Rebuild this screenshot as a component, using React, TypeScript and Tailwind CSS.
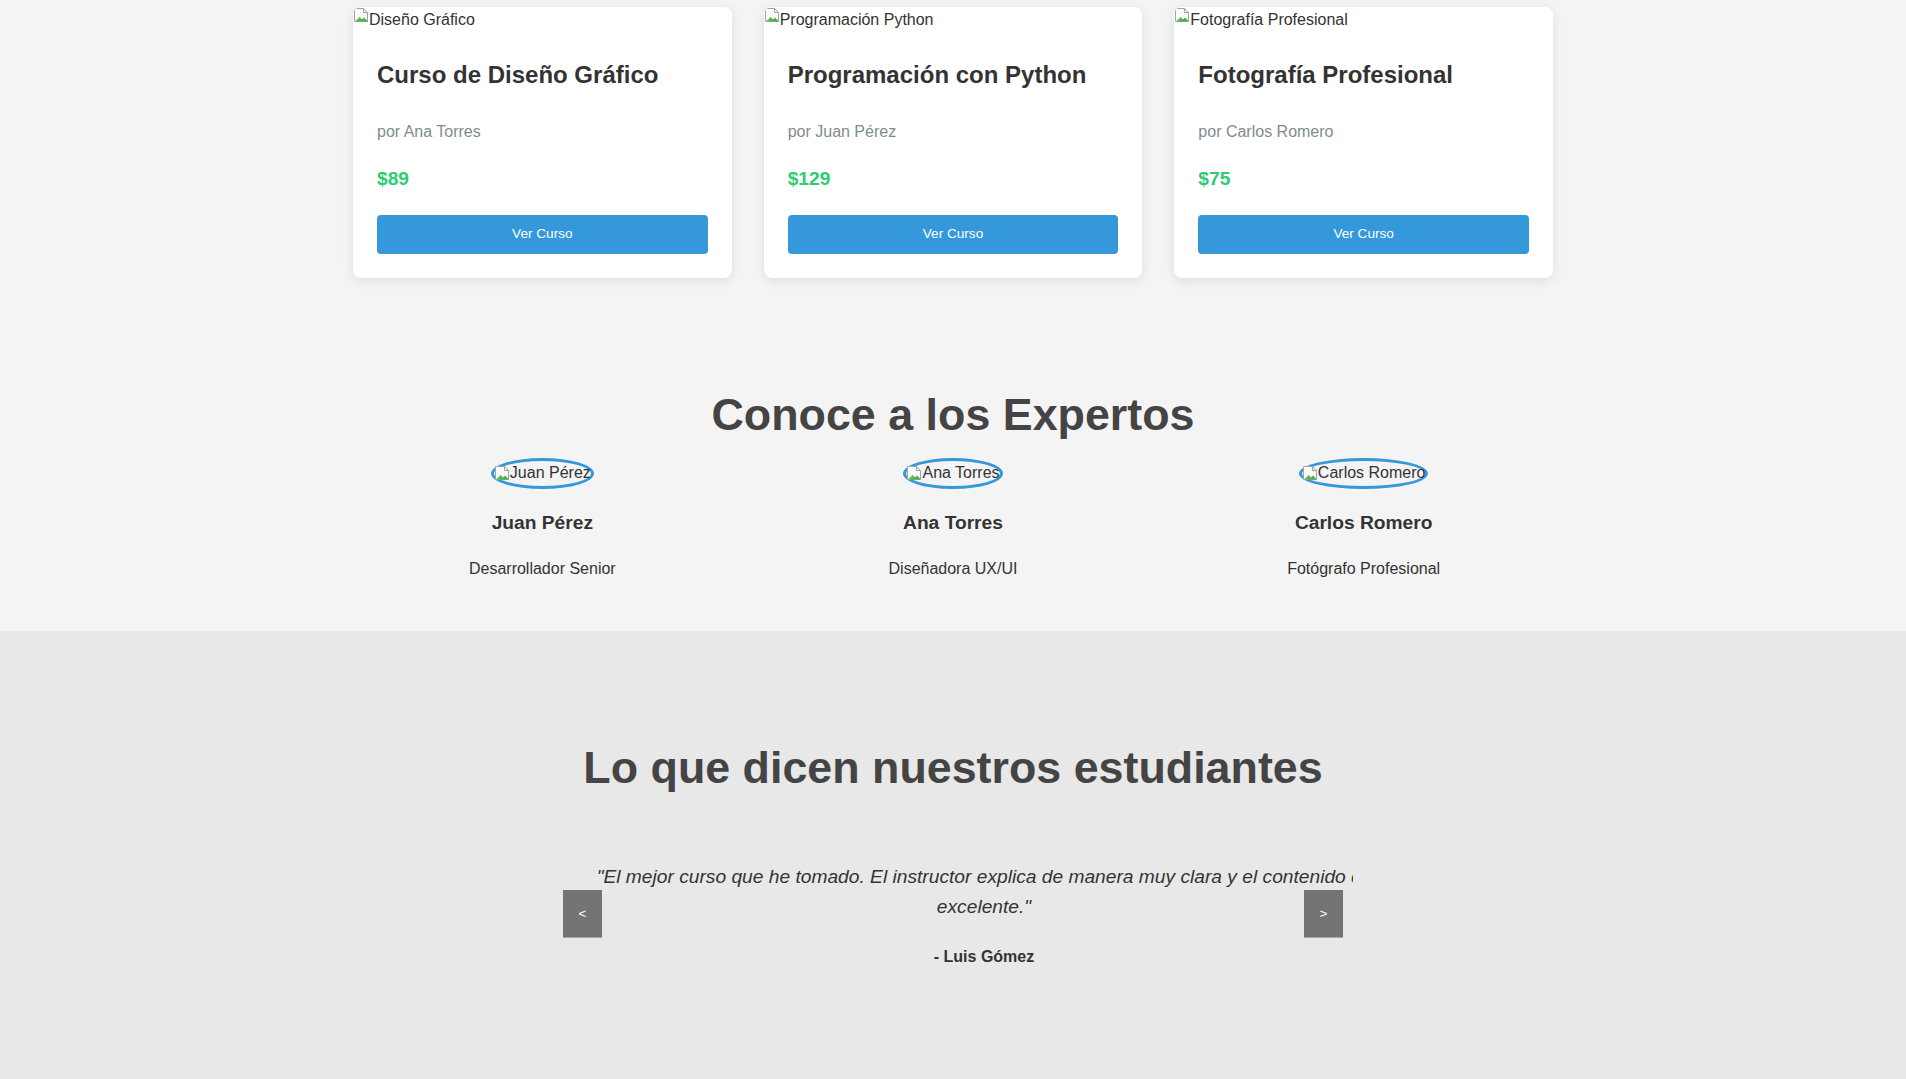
import React from 'react';

interface Course {
  alt: string;
  title: string;
  author: string;
  price: string;
}

interface Expert {
  name: string;
  role: string;
}

const COURSES: Course[] = [
  { alt: 'Diseño Gráfico', title: 'Curso de Diseño Gráfico', author: 'por Ana Torres', price: '$89' },
  { alt: 'Programación Python', title: 'Programación con Python', author: 'por Juan Pérez', price: '$129' },
  { alt: 'Fotografía Profesional', title: 'Fotografía Profesional', author: 'por Carlos Romero', price: '$75' },
];

const EXPERTS: Expert[] = [
  { name: 'Juan Pérez', role: 'Desarrollador Senior' },
  { name: 'Ana Torres', role: 'Diseñadora UX/UI' },
  { name: 'Carlos Romero', role: 'Fotógrafo Profesional' },
];

// the little "image failed to load" glyph the browser draws next to alt text
const BrokenImage: React.FC = () => (
  <svg width="16" height="16" viewBox="0 0 16 16" className="shrink-0">
    <path d="M1.5 1.5h9l4 4v9h-13z" fill="#fbfbfb" stroke="#a3a3a3" />
    <path d="M10.5 1.5v4h4" fill="none" stroke="#a3a3a3" />
    <path d="M2 14.5l4.5-4.5 2.5 2.5 2-2 3.5 3.5v0.5z" fill="#4caf50" />
    <path d="M2 14.5l4.5-4.5 1 1-3.5 3.5z" fill="#7cc576" />
  </svg>
);

const CourseCard: React.FC<{ course: Course }> = ({ course }) => (
  <div className="bg-white rounded-lg shadow-[0_3px_12px_rgba(0,0,0,0.09)] overflow-hidden">
    <div className="flex items-start h-[25.6px] text-base leading-[1.6] text-[#333]">
      <BrokenImage />
      <span>{course.alt}</span>
    </div>
    <div className="p-6">
      <h3 className="-mt-px text-[24px] font-bold leading-[1.6] text-[#333]">{course.title}</h3>
      <p className="mt-[25.5px] text-base leading-[1.6] text-[#7f8c8d]">{course.author}</p>
      <p className="mt-[18.8px] text-[19.2px] font-bold leading-[1.6] text-[#2ecc71]">{course.price}</p>
      <button className="mt-[20px] w-full h-[39px] rounded-[4px] bg-[#3498db] text-white text-[13.6px] leading-none">
        Ver Curso
      </button>
    </div>
  </div>
);

const ExpertCard: React.FC<{ expert: Expert }> = ({ expert }) => (
  <div className="flex flex-col items-center text-center">
    <div className="inline-flex items-center h-[31px] border-[3px] border-[#3498db] rounded-[50%] text-base leading-[1.6] text-[#333]">
      <BrokenImage />
      <span>{expert.name}</span>
    </div>
    <h4 className="mt-[19.6px] text-[19.2px] font-bold leading-[1.6] text-[#333]">{expert.name}</h4>
    <p className="mt-[16.9px] text-base leading-[1.6] text-[#333]">{expert.role}</p>
  </div>
);

export default function App() {
  return (
    <div className="min-h-screen bg-[#f4f4f4] font-['Liberation_Sans',Arial,sans-serif]">
      {/* Courses */}
      <section className="pt-[7px] pb-[60px]">
        <div className="max-w-[1200px] mx-auto grid grid-cols-3 gap-8">
          {COURSES.map(c => (
            <CourseCard key={c.title} course={c} />
          ))}
        </div>
      </section>

      {/* Experts */}
      <section className="pt-[51px] pb-[49.2px]">
        <h2 className="text-center text-[44.8px] font-bold leading-[1.15] text-[#444]">Conoce a los Expertos</h2>
        <div className="max-w-[1200px] mx-auto mt-[17.5px] grid grid-cols-3 gap-8">
          {EXPERTS.map(e => (
            <ExpertCard key={e.name} expert={e} />
          ))}
        </div>
      </section>

      {/* Testimonials */}
      <section className="bg-[#e8e8e8] pt-[111.5px] pb-[109px]">
        <h2 className="text-center text-[44.8px] font-bold leading-[1.15] text-[#444]">
          Lo que dicen nuestros estudiantes
        </h2>
        <div className="relative max-w-[800px] mx-auto mt-[68px] overflow-hidden">
          <div className="flex">
            <div className="w-full shrink-0 ml-[31px] text-center">
              <p className="italic text-[19.2px] leading-[1.6] text-[#333]">
                "El mejor curso que he tomado. El instructor explica de manera muy clara y el contenido es excelente."
              </p>
              <p className="mt-[19.6px] text-base font-bold leading-[1.7] text-[#333]">- Luis Gómez</p>
            </div>
          </div>
          <button className="absolute left-[10px] top-1/2 -mt-[26px] w-[39px] h-[48px] bg-[#747474] border-b border-[#a8a8a8] text-white text-[13.33px] leading-none">
            &lt;
          </button>
          <button className="absolute right-[10px] top-1/2 -mt-[26px] w-[39px] h-[48px] bg-[#747474] border-b border-[#a8a8a8] text-white text-[13.33px] leading-none">
            &gt;
          </button>
        </div>
      </section>
    </div>
  );
}
